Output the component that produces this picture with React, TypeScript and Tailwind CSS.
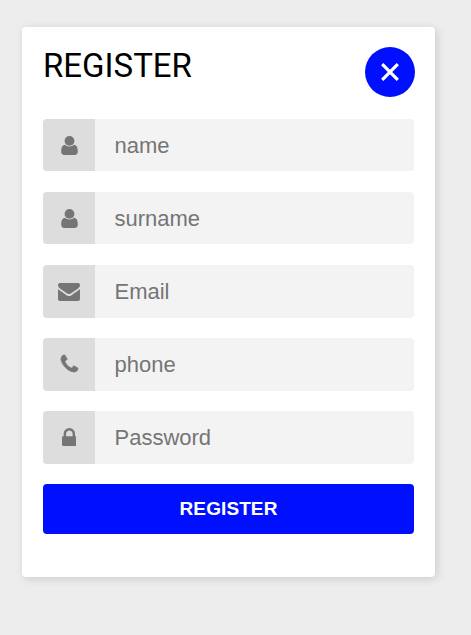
import type { ReactNode } from "react";

const UserIcon = () => (
  <svg viewBox="0 0 17 20" className="mt-0.5 h-5 w-[17px]" fill="currentColor">
    <path d="M4 8.700C1.200 9 .2 11.500.2 15.500c0 2.200 1.200 3.500 3 3.500h10.600c1.800 0 3-1.300 3-3.500 0-4-1-6.500-3.800-6.800-1.100 1-2.800 1.600-4.500 1.600S5.100 9.700 4 8.700z" />
    <circle cx="8.500" cy="4.900" r="5.300" fill="#dddddd" />
    <circle cx="8.500" cy="4.900" r="4.900" />
  </svg>
);
const MailIcon = () => (
  <svg viewBox="0 0 22 18" className="mt-0.5 h-[18px] w-[22px]" fill="currentColor">
    <path d="M2 0h18a2 2 0 0 1 2 2v.3c0 1.300-1 2.500-2.300 3.400L13.500 10c-.9.600-1.700 1.100-2.500 1.100s-1.600-.5-2.500-1.100L2.300 5.700C1 4.800 0 3.600 0 2.300V2a2 2 0 0 1 2-2z" />
    <path d="M0 5.900c.5.600 1 1 1.500 1.400l6 4.100c1.300.9 2.300 1.600 3.500 1.600s2.200-.7 3.500-1.600l6-4.100c.5-.4 1-.8 1.500-1.400V16a2 2 0 0 1-2 2H2a2 2 0 0 1-2-2z" />
  </svg>
);
const PhoneIcon = () => (
  <svg viewBox="0 0 1408 1408" className="-mt-0.5 ml-px h-[17px] w-[17px] overflow-visible" fill="currentColor">
    <path stroke="currentColor" strokeWidth="50" d="M1408 1112q0 27-10 70.500t-21 68.500q-21 50-122 106-94 51-186 51-27 0-53-3.500t-57.500-12.500-47-14.500-55.500-20.500-49-18q-98-35-175-83-127-79-264-216t-216-264q-48-77-83-175-3-9-18-49t-20.500-55.500-14.500-47-12.500-57.500-3.500-53q0-92 51-186 56-101 106-122 25-11 68.500-21t70.500-10q14 0 21 3 18 6 53 76 11 19 30 54t35 63.500 31 53.500q3 4 17.500 25t21.500 35.500 7 28.500q0 20-28.500 50t-62 55-62 53-28.500 46q0 9 5 22.500t8.500 20.500 14 24 11.500 19q76 137 174 235t235 174q2 1 19 11.500t24 14 20.500 8.500 22.500 5q18 0 46-28.500t53-62 55-62 50-28.500q14 0 28.500 7t35.500 21.500 25 17.500q25 15 53.500 31t63.500 35 54 30q70 35 76 53 3 7 3 21z" />
  </svg>
);
const LockIcon = () => (
  <svg viewBox="0 0 1152 1408" className="-mt-[1.5px] h-[18px] w-[14.700px]" fill="currentColor">
    <path d="M320 640h512v-192q0-106-75-181t-181-75-181 75-75 181v192zM1152 736v576q0 40-28 68t-68 28h-960q-40 0-68-28t-28-68v-576q0-40 28-68t68-28h32v-192q0-184 132-316t316-132 316 132 132 316v192h32q40 0 68 28t28 68z" />
  </svg>
);

const fields: { icon: ReactNode; label: string; type: string }[] = [
  { icon: <UserIcon />, label: "name", type: "text" },
  { icon: <UserIcon />, label: "surname", type: "text" },
  { icon: <MailIcon />, label: "Email", type: "email" },
  { icon: <PhoneIcon />, label: "phone", type: "tel" },
  { icon: <LockIcon />, label: "Password", type: "password" },
];

export default function App() {
  return (
    <div className="h-[635px] w-full bg-[#ededed] pl-[22px] pt-[27px] font-['Liberation_Sans',Arial,sans-serif]">
      <form className="h-[550px] w-[413px] rounded-[4px] bg-white px-[21px] pt-5 shadow-[2px_2px_8px_rgba(0,0,0,0.14)]">
        <header className="flex h-[72px] items-start justify-between">
          <h1 className="font-[Roboto,sans-serif] text-[33px] leading-[38px] text-black">REGISTER</h1>
          <button type="button" aria-label="Close" className="-mr-px flex size-[50px] items-center justify-center rounded-full bg-[#0010ff] text-white">
            <svg viewBox="0 0 20 20" className="size-5" stroke="currentColor" strokeWidth="3.200" fill="none">
              <path d="M2.200 2.200 17.800 17.800M17.800 2.200 2.200 17.800" />
            </svg>
          </button>
        </header>
        <div className="flex flex-col gap-[20.7px]">
          {fields.map((f) => (
            <label key={f.label} className="flex h-[52.4px] overflow-hidden rounded-[4px] bg-[#f3f3f3]">
              <span className="flex w-[52px] shrink-0 items-center justify-center bg-[#dddddd] text-[#757575]">{f.icon}</span>
              <input type={f.type} placeholder={f.label} className="min-w-0 flex-1 bg-transparent pl-[19.5px] pr-5 text-[22px] placeholder:text-[#757575]" />
            </label>
          ))}
        </div>
        <button type="button" className="mt-[20.2px] h-[50px] w-full rounded-[4px] bg-[#0010ff] text-[19px] font-bold tracking-[0.1px] text-white">REGISTER</button>
      </form>
    </div>
  );
}
